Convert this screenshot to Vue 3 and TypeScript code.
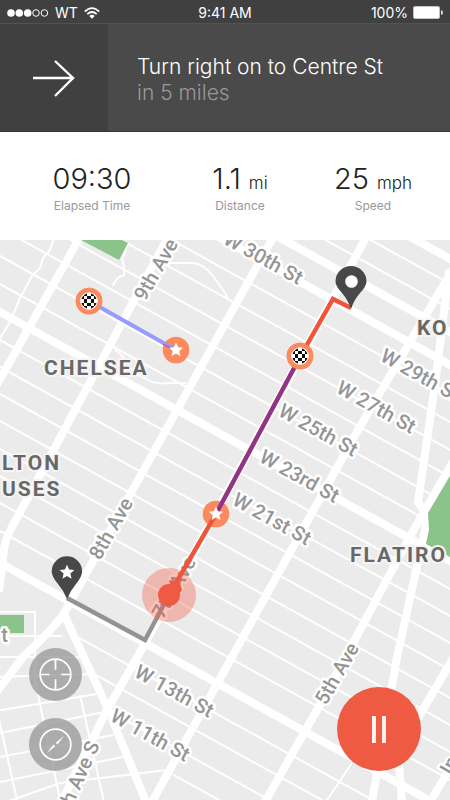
<script setup lang="ts">
import { ref } from 'vue'

interface Stat { label: string; value: string; unit?: string }
interface StreetLabel { text: string; x: number; y: number; angle: number; anchor?: 'start' | 'end' }
interface AreaLabel { text: string; x: number; y: number }
interface Point { x: number; y: number }

const stats: Stat[] = [
  { label: 'Elapsed Time', value: '09:30' },
  { label: 'Distance', value: '1.1', unit: 'mi' },
  { label: 'Speed', value: '25', unit: 'mph' },
]

/* Cross streets share one slope; each is described by where it meets x = 0. */
const SLOPE = 0.553
const crossStreet = (intercept: number, from = -10, to = 460): string =>
  `M${from} ${intercept + SLOPE * from}L${to} ${intercept + SLOPE * to}`

const minorStreets: string[] = [
  ...[35, 60, 145, 173, 201, 228, 256, 284, 340, 367, 394, 421, 449, 476, 503, 531].map((i) => crossStreet(i)),
  crossStreet(594, 72),
  crossStreet(622, 88),
  crossStreet(651, 105),
  crossStreet(679, 173),
]

const lanes: string[] = [
  'M-5 711L103 693',
  'M-5 734L104 712',
  'M-5 758L113 735',
  'M-5 783L123 757',
  'M-5 806L60 783L167 770',
  'M-2 715L17 800',
  'M35 612V680L60 800',
  'M80 695L104 802',
  'M-5 657H82',
  'M-5 677L93 674',
  'M-5 636H62',
  'M-5 612H36',
  'M352 763L327 800',
  'M54 238L50 250L43 258L40 268L32 276L20 298L10 322L-3 343',
  'M128 244L122 260Q125 266 124 275Q116 277 113 286',
  'M165 263H193Q204 264 213 276T228 298',
  'M115 350Q124 356 127 363Q132 373 145 378Q155 385 168 383H186',
]

const mainStreets: string[] = [
  crossStreet(10),
  crossStreet(83),
  crossStreet(116),
  crossStreet(312),
  crossStreet(563),
]

const avenues: string[] = [
  'M84 230L-6 390',
  'M172 230L12 527Q4 540 3 558L-1 592',
  'M276 232L77 590L63 615Q55 627 23 657L-5 694',
  'M63 612L107 707L147 804',
  'M370 230L143 647L107 710L55 815',
  'M456 264L358 430L232 657L152 802',
  'M455 458L412 533L317 710L265 802',
  'M449 270L435 385L418 502L427 516L425 530L397 657L372 802',
  'M455 655L398 752L402 802',
  'M455 760L430 802',
]

const streetLabels: StreetLabel[] = [
  { text: 'W 30th St', x: 298, y: 285, angle: 29, anchor: 'end' },
  { text: 'W 29th St', x: 379, y: 360, angle: 29 },
  { text: 'W 27th St', x: 335, y: 392, angle: 29 },
  { text: 'W 25th St', x: 277, y: 415, angle: 29 },
  { text: 'W 23rd St', x: 258, y: 461, angle: 29 },
  { text: 'W 21st St', x: 231, y: 504, angle: 29 },
  { text: 'W 13th St', x: 133, y: 676, angle: 29 },
  { text: 'W 11th St', x: 109, y: 720, angle: 29 },
  { text: '9th Ave', x: 145, y: 302, angle: -60 },
  { text: '8th Ave', x: 100, y: 561, angle: -60 },
  { text: '7th Ave', x: 163, y: 620, angle: -60 },
  { text: '5th Ave', x: 326, y: 706, angle: -60 },
  { text: '7th Ave S', x: 100, y: 745, angle: -66, anchor: 'end' },
  { text: 'In', x: 451, y: 776, angle: -60 },
  { text: 't', x: 8, y: 642, angle: 0, anchor: 'end' },
]

const areaLabels: AreaLabel[] = [
  { text: 'CHELSEA', x: 44, y: 375 },
  { text: 'KO', x: 417, y: 335 },
  { text: 'LTON', x: 2, y: 470 },
  { text: 'USES', x: 2, y: 496 },
  { text: 'FLATIRO', x: 350, y: 562 },
]

const star = (cx: number, cy: number, r: number): string =>
  Array.from({ length: 10 }, (_, i) => {
    const a = -Math.PI / 2 + (i * Math.PI) / 5
    const d = i % 2 ? r * 0.46 : r
    return `${(cx + d * Math.cos(a)).toFixed(2)},${(cy + d * Math.sin(a)).toFixed(2)}`
  }).join(' ')

const flags: Point[] = [{ x: 89, y: 301 }, { x: 300, y: 356 }]
const stars: Point[] = [{ x: 176, y: 350 }, { x: 216, y: 514 }]

const paused = ref(false)
</script>

<template>
  <main class="screen">
    <header>
      <div class="status">
        <div class="carrier">
          <svg class="signal" viewBox="0 0 42 10" aria-hidden="true">
            <g fill="#fff"><circle cx="4" cy="5" r="3.8" /><circle cx="12.300" cy="5" r="3.8" /><circle cx="20.700" cy="5" r="3.8" /></g>
            <g fill="none" stroke="#fff"><circle cx="29" cy="5" r="3.3" /><circle cx="37.400" cy="5" r="3.3" /></g>
          </svg>
          <span>WT</span>
          <svg class="wifi" viewBox="0 0 16 12" aria-hidden="true">
            <g fill="none" stroke="#fff" stroke-width="1.8">
              <path d="M.8 4.6Q8-2.4 15.2 4.6" /><path d="M3.3 7.2Q8 2.8 12.7 7.2" />
            </g>
            <path d="M5.3 9Q8 6.6 10.7 9L8 11.7Z" fill="#fff" />
          </svg>
        </div>
        <span>9:41 AM</span>
        <div class="power">
          <span>100%</span>
          <svg class="battery" viewBox="0 0 30 13" aria-hidden="true">
            <rect x=".5" y=".5" width="26" height="12" rx="1.5" fill="#fff" stroke="#c4c4c4" />
            <path d="M28 4Q30 4.500 30 6.500T28 9Z" fill="#ddd" />
          </svg>
        </div>
      </div>
      <section class="turn">
        <div class="direction">
          <svg class="arrow" viewBox="0 0 44 38" aria-hidden="true">
            <path d="M1 19H42M23 2L41 19L23 37" fill="none" stroke="#fff" stroke-width="2.4" />
          </svg>
        </div>
        <div class="instruction">
          <h1>Turn right on to Centre St</h1>
          <p>in 5 miles</p>
        </div>
      </section>
    </header>

    <dl class="stats">
      <div v-for="s in stats" :key="s.label" class="stat">
        <dt>{{ s.label }}</dt>
        <dd>{{ s.value }}<small v-if="s.unit">{{ s.unit }}</small></dd>
      </div>
    </dl>

    <section class="map">
      <svg class="canvas" viewBox="0 240 450 560" preserveAspectRatio="xMidYMid slice" role="img" aria-label="Route map">
        <defs>
          <clipPath id="flag-disc"><circle r="7.800" /></clipPath>
        </defs>
        <rect x="0" y="240" width="450" height="560" fill="#ebebeb" />
        <g class="roads">
          <path v-for="d in minorStreets" :key="d" :d="d" class="minor" />
          <path v-for="d in lanes" :key="d" :d="d" class="minor" />
          <path v-for="d in mainStreets" :key="d" :d="d" class="major" />
          <path v-for="d in avenues" :key="d" :d="d" class="major" />
        </g>
        <g fill="#8bc48a">
          <path d="M81 240H122L128 243L119 260Z" />
          <path d="M450 476L428 513L429 530L426 544L450 557Z" />
          <path d="M0 615H24V633H0Z" />
        </g>

        <g class="street-labels">
          <text
            v-for="l in streetLabels"
            :key="l.text + l.x"
            :transform="`translate(${l.x} ${l.y}) rotate(${l.angle})`"
            :text-anchor="l.anchor ?? 'start'"
          >{{ l.text }}</text>
        </g>
        <g class="area-labels">
          <text v-for="l in areaLabels" :key="l.text" :x="l.x" :y="l.y">{{ l.text }}</text>
        </g>

        <g fill="#fb8a5e">
          <circle v-for="p in [...flags, ...stars]" :key="`${p.x}-${p.y}`" :cx="p.x" :cy="p.y" r="13.300" />
        </g>
        <g fill="none">
          <path d="M67 598L145 640L169 595" stroke="#939393" stroke-width="4.500" />
          <circle cx="169" cy="595" r="27" fill="#f05a42" fill-opacity=".36" />
          <path d="M169 595L216 514L300 357L333 299L351 308" stroke="#f0553b" stroke-width="4.500" />
          <path d="M300 357L216 514" stroke="#8a3590" stroke-width="4" />
          <path d="M89 301L176 350" stroke="#979bff" stroke-width="4" />
          <path d="M162 344.500L165 344L176 350L174 351.500Z" fill="#b96b96" />
        </g>
        <path d="M169 580L180 583L182 590L175 600Z" fill="#ef5a43" />
        <circle cx="169" cy="595" r="11" fill="#ef5a43" />

        <g v-for="p in flags" :key="p.x" :transform="`translate(${p.x} ${p.y})`">
          <circle r="13.300" fill="#fb8a5e" />
          <circle r="8.800" fill="#fff" />
          <path
            clip-path="url(#flag-disc)"
            d="M-5 -8H-2V-5H-5ZM2 -8H5V-5H2ZM-8 -5H-5V-2H-8ZM-2 -5H2V-2H-2ZM5 -5H8V-2H5ZM-5 -2H-2V2H-5ZM2 -2H5V2H2ZM-8 2H-5V5H-8ZM-2 2H2V5H-2ZM5 2H8V5H5ZM-5 5H-2V8H-5ZM2 5H5V8H2Z"
            fill="#111"
          />
        </g>
        <polygon v-for="p in stars" :key="p.y" :points="star(p.x, p.y, 7.5)" fill="#fff" />

        <path d="M351 309Q348 300 342 293Q335.500 286 335.500 281.500A15.500 15.500 0 0 1 366.500 281.500Q366.500 286 360 293Q354 300 351 309Z" fill="#484848" />
        <circle cx="351.500" cy="281.500" r="6.300" fill="#fff" />
        <path d="M67 599Q64 591 58 584Q51.700 576.500 51.700 571.500A15.200 15.200 0 0 1 82.100 571.500Q82.100 576.500 76 584Q70 591 67 599Z" fill="#484848" />
        <polygon :points="star(67, 572.5, 7.8)" fill="#fff" />
      </svg>

      <div class="controls">
        <div class="tools">
          <button type="button" class="tool" aria-label="Center on my location">
            <svg viewBox="0 0 34 34" aria-hidden="true">
              <path d="M17 1.200A15.800 15.800 0 1 0 17 32.800A15.800 15.800 0 1 0 17 1.200M17 2V12M17 22V32M2 17H11M23 17H32" fill="none" stroke="#fff" stroke-width="1.800" />
            </svg>
          </button>
          <button type="button" class="tool" aria-label="Compass">
            <svg viewBox="0 0 34 34" aria-hidden="true">
              <circle cx="17" cy="17" r="15.800" fill="none" stroke="#fff" stroke-width="1.800" />
              <path d="M26 8L19 17L17.300 15.200ZM8 26L15 17L16.700 18.800Z" fill="#fff" />
            </svg>
          </button>
        </div>
        <button type="button" class="pause" :aria-pressed="paused" aria-label="Pause" @click="paused = !paused">
          <svg viewBox="0 0 16 28" aria-hidden="true"><path d="M1 1H5V28H1ZM11 1H15V28H11Z" fill="#fff" fill-opacity=".93" /></svg>
        </button>
      </div>
    </section>
  </main>
</template>

<style>
body {
  background: #ebebeb;
}
</style>

<style scoped>
.screen {
  display: flex;
  flex-direction: column;
  min-height: 100vh;
  font-family: Inter, "Liberation Sans", sans-serif;
  color: #222;
}
.status {
  display: grid;
  grid-template-columns: 1fr auto 1fr;
  align-items: center;
  height: 23px;
  padding: 2px 7px 0;
  box-sizing: border-box;
  background: #404040;
  color: #fff;
  font-size: 14px;
  line-height: 20px;
}
.carrier,
.power {
  display: flex;
  align-items: center;
}
.carrier {
  gap: 6px;
}
.power {
  justify-content: flex-end;
  gap: 5px;
  font-size: 14px;
}
.signal {
  width: 42px;
  height: 10px;
}
.wifi {
  width: 16px;
  height: 12px;
}
.battery {
  width: 30px;
  height: 13px;
}
.turn {
  display: flex;
  min-height: 107px;
  border-top: 1px solid #525252;
  border-bottom: 1px solid #383537;
  background: #4a4a4a;
}
.direction {
  display: flex;
  align-items: center;
  justify-content: center;
  width: 24%;
  background: #404040;
}
.arrow {
  width: 44px;
  height: 38px;
}
.instruction {
  display: flex;
  flex: 1;
  flex-direction: column;
  justify-content: center;
  padding: 4px 0 0 29px;
}
h1,
p {
  margin: 0;
  font-size: 21px;
  font-weight: 300;
  line-height: 26px;
}
h1 {
  color: #fff;
}
p {
  color: #999;
}
.stats {
  display: grid;
  grid-template-columns: 184fr 112fr 154fr;
  margin: 0;
  padding: 29px 0 25px;
  background: #fff;
}
.stat {
  display: flex;
  flex-direction: column-reverse;
  align-items: center;
}
dt {
  color: #999;
  font-size: 12px;
  line-height: 18px;
}
dd {
  margin: 0;
  font-size: 29px;
  font-weight: 300;
  line-height: 36px;
}
small {
  margin-left: 8px;
  font-size: 17px;
  line-height: 1;
}
.map {
  position: relative;
  display: flex;
  flex: 1;
  min-height: 400px;
  overflow: hidden;
}
.canvas {
  position: absolute;
  width: 100%;
  height: 100%;
}
.roads {
  fill: none;
  stroke: #fff;
}
.minor {
  stroke-width: 2;
}
.major {
  stroke-width: 8;
  stroke-linejoin: round;
}
.street-labels,
.area-labels {
  font-family: Roboto, "Liberation Sans", sans-serif;
  paint-order: stroke;
  stroke: #fff;
  stroke-linejoin: round;
}
.street-labels {
  fill: #959595;
  font-size: 20px;
  font-weight: 500;
  stroke-width: 5;
}
.area-labels {
  fill: #686868;
  font-size: 21px;
  font-weight: 700;
  letter-spacing: 2px;
  stroke: #f5f5f5;
  stroke-width: 4;
}
.controls {
  position: absolute;
  right: 29px;
  bottom: 29px;
  left: 29px;
  display: flex;
  align-items: flex-end;
  justify-content: space-between;
}
.tools {
  display: flex;
  flex-direction: column;
  gap: 17px;
}
button {
  display: flex;
  align-items: center;
  justify-content: center;
  padding: 0;
  border: 0;
  border-radius: 50%;
  cursor: pointer;
}
.tool {
  width: 53px;
  height: 53px;
  background: rgba(155, 155, 155, 0.8);
}
.tool svg {
  width: 33px;
  height: 33px;
}
.pause {
  width: 84px;
  height: 84px;
  background: #ef5a43;
}
.pause svg {
  width: 16px;
  height: 28px;
}
</style>
